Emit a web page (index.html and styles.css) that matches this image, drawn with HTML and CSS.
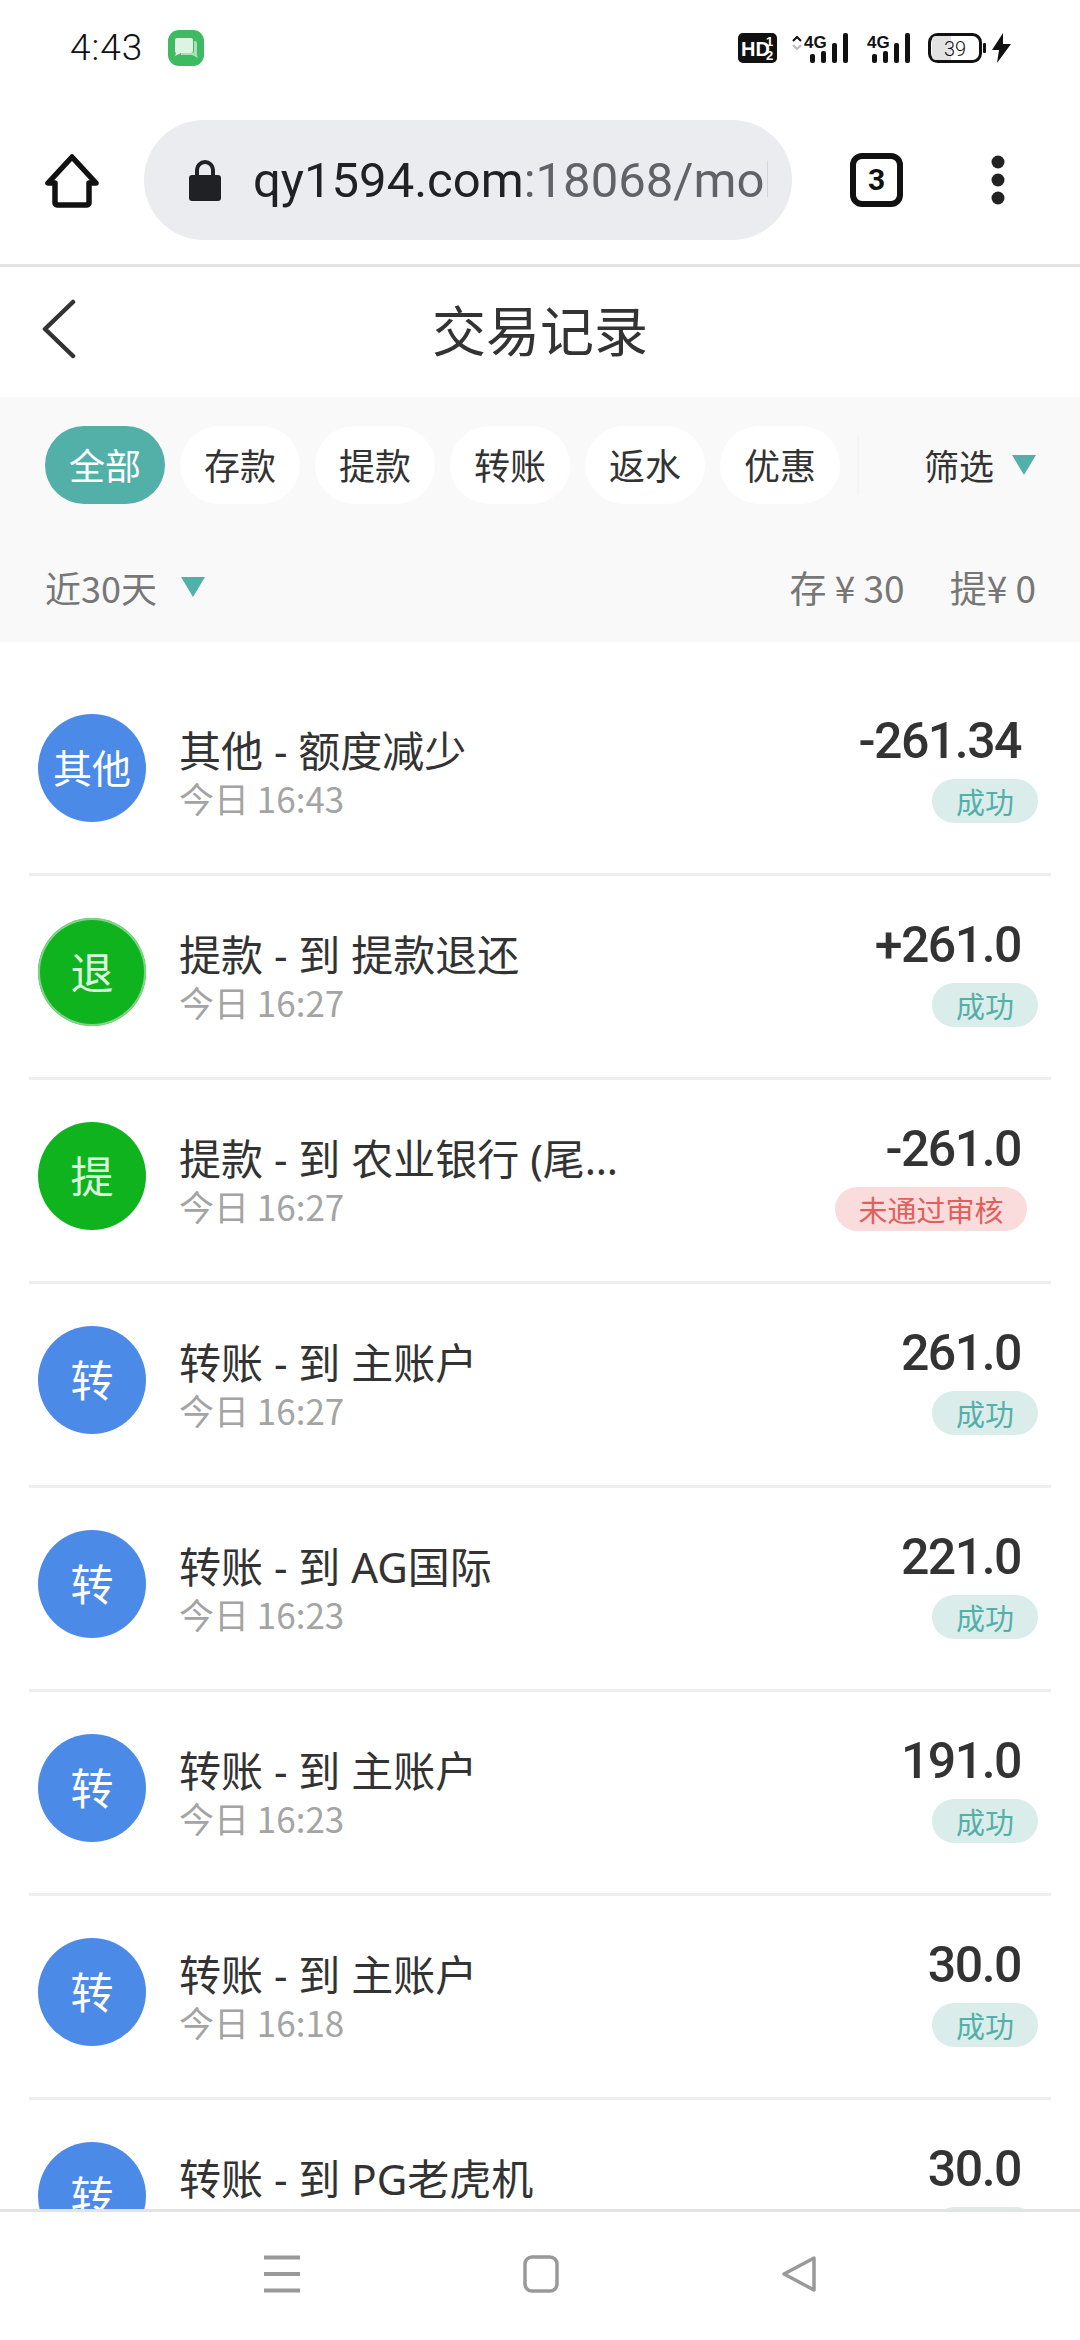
FILE: index.html
```html
<!DOCTYPE html>
<html lang="zh-CN">
<head>
<meta charset="utf-8">
<title>交易记录</title>
<link rel="stylesheet" href="styles.css">
</head>
<body>
<div class="phone">
  <div class="status">
    <div class="status-left">
      <span class="clock">4:43</span>
      <svg class="app-icon" width="36" height="36" viewBox="0 0 36 36"><rect width="36" height="36" rx="11" fill="#3dba62"/><path d="M26 11h1a2 2 0 0 1 2 2v12l1 3-6-3H13v-2h11a2 2 0 0 0 2-2z" fill="#a9dfb9"/><path d="M9 8h14a2 2 0 0 1 2 2v11a2 2 0 0 1-2 2H13l-6 3 1-3a2 2 0 0 1-1-2V10a2 2 0 0 1 2-2z" fill="#dff3e5"/></svg>
    </div>
    <div class="status-right">
      <svg width="39" height="30" viewBox="0 0 39 30"><rect width="39" height="30" rx="5" fill="#111"/><text x="3" y="23" class="hd">HD</text><text x="28" y="13" class="hd-s">1</text><text x="28" y="27" class="hd-s">2</text></svg>
      <svg class="sig1" width="56" height="30" viewBox="0 0 56 30"><path d="M1 8l4-4 4 4" fill="none" stroke="#111" stroke-width="2"/><path d="M1 12l4 4 4-4" fill="none" stroke="#bbb" stroke-width="2"/><text x="12" y="15" class="g4">4G</text><rect x="18" y="21" width="5" height="9" rx="2" fill="#111"/><rect x="29" y="18" width="5" height="12" rx="2" fill="#111"/><rect x="40" y="10" width="5" height="20" rx="2" fill="#111"/><rect x="51" y="0" width="5" height="30" rx="2" fill="#111"/></svg>
      <svg class="sig2" width="43" height="30" viewBox="0 0 43 30"><text x="0" y="15" class="g4">4G</text><rect x="5" y="21" width="5" height="9" rx="2" fill="#111"/><rect x="16" y="18" width="5" height="12" rx="2" fill="#111"/><rect x="27" y="10" width="5" height="20" rx="2" fill="#111"/><rect x="38" y="0" width="5" height="30" rx="2" fill="#111"/></svg>
      <svg class="batt" width="58" height="30" viewBox="0 0 58 30"><rect x="1.5" y="1.5" width="51" height="27" rx="8" fill="#fff" stroke="#111" stroke-width="3"/><path d="M4 7a4 4 0 0 1 4-4h15v24H8a4 4 0 0 1-4-4z" fill="#e2e2e2"/><rect x="55" y="10" width="3" height="10" rx="1" fill="#111"/><text x="27" y="23" class="batt-t">39</text></svg>
      <svg class="bolt" width="19" height="30" viewBox="0 0 19 30"><path d="M11 0L0 17h7L5 30 19 11h-8z" fill="#111"/></svg>
    </div>
  </div>

  <div class="toolbar">
    <svg class="home" width="58" height="58" viewBox="0 0 58 58"><path d="M29 6L5 32h7v20a2 2 0 0 0 2 2h30a2 2 0 0 0 2-2V32h7z" fill="none" stroke="#111" stroke-width="5.5" stroke-linejoin="round"/></svg>
    <div class="url">
      <svg width="34" height="42" viewBox="0 0 34 42"><path d="M9 17V11a8 8 0 0 1 16 0v6" fill="none" stroke="#202124" stroke-width="4"/><rect x="1" y="16" width="32" height="26" rx="3" fill="#202124"/></svg>
      <div class="url-text"><span class="u-dark">qy1594.com</span><span class="u-grey">:18068/mobile/trade</span></div>
    </div>
    <div class="tabs">3</div>
    <svg class="more" width="16" height="50" viewBox="0 0 16 50"><circle cx="8" cy="7" r="6.5" fill="#222"/><circle cx="8" cy="25" r="6.5" fill="#222"/><circle cx="8" cy="43" r="6.5" fill="#222"/></svg>
  </div>

  <div class="header">
    <svg class="back" width="38" height="60" viewBox="0 0 38 60"><path d="M33 3L5 30l28 27" fill="none" stroke="#333" stroke-width="4.5" stroke-linecap="round" stroke-linejoin="round"/></svg>
    <h1 class="title">交易记录</h1>
  </div>

  <div class="filters">
    <div class="chip-row">
      <div class="chips">
        <span class="chip active">全部</span>
        <span class="chip">存款</span>
        <span class="chip">提款</span>
        <span class="chip">转账</span>
        <span class="chip">返水</span>
        <span class="chip">优惠</span>
        <span class="chip-sep"></span>
      </div>
      <div class="filter-btn">筛选<i class="tri"></i></div>
    </div>
    <div class="sum-row">
      <div class="range">近30天<i class="tri"></i></div>
      <div class="sums"><span>存 ¥ 30</span><span>提¥ 0</span></div>
    </div>
  </div>

  <div class="list">
    <div class="row">
      <div class="avatar blue two">其他</div>
      <div class="info"><div class="name">其他 - 额度减少</div><div class="time">今日 16:43</div></div>
      <div class="side"><div class="amt">-261.34</div><div class="badge ok">成功</div></div>
    </div>
    <div class="row">
      <div class="avatar green ring">退</div>
      <div class="info"><div class="name">提款 - 到 提款退还</div><div class="time">今日 16:27</div></div>
      <div class="side"><div class="amt">+261.0</div><div class="badge ok">成功</div></div>
    </div>
    <div class="row">
      <div class="avatar green">提</div>
      <div class="info"><div class="name trunc">提款 - 到 农业银行 (尾号1234)</div><div class="time">今日 16:27</div></div>
      <div class="side"><div class="amt">-261.0</div><div class="badge bad">未通过审核</div></div>
    </div>
    <div class="row">
      <div class="avatar blue">转</div>
      <div class="info"><div class="name">转账 - 到 主账户</div><div class="time">今日 16:27</div></div>
      <div class="side"><div class="amt">261.0</div><div class="badge ok">成功</div></div>
    </div>
    <div class="row">
      <div class="avatar blue">转</div>
      <div class="info"><div class="name">转账 - 到 AG国际</div><div class="time">今日 16:23</div></div>
      <div class="side"><div class="amt">221.0</div><div class="badge ok">成功</div></div>
    </div>
    <div class="row">
      <div class="avatar blue">转</div>
      <div class="info"><div class="name">转账 - 到 主账户</div><div class="time">今日 16:23</div></div>
      <div class="side"><div class="amt">191.0</div><div class="badge ok">成功</div></div>
    </div>
    <div class="row">
      <div class="avatar blue">转</div>
      <div class="info"><div class="name">转账 - 到 主账户</div><div class="time">今日 16:18</div></div>
      <div class="side"><div class="amt">30.0</div><div class="badge ok">成功</div></div>
    </div>
    <div class="row">
      <div class="avatar blue">转</div>
      <div class="info"><div class="name">转账 - 到 PG老虎机</div><div class="time">今日 16:18</div></div>
      <div class="side"><div class="amt">30.0</div><div class="badge ok">成功</div></div>
    </div>
  </div>

  <div class="navbar">
    <svg width="38" height="38" viewBox="0 0 38 38"><path d="M1 2.5h36M1 19h36M1 35.5h36" stroke="#999" stroke-width="4"/></svg>
    <svg width="36" height="38" viewBox="0 0 36 38"><rect x="2" y="2" width="32" height="34" rx="7" fill="none" stroke="#999" stroke-width="3.5"/></svg>
    <svg width="36" height="38" viewBox="0 0 36 38"><path d="M33 3L3 19l30 16z" fill="none" stroke="#999" stroke-width="3.5" stroke-linejoin="round"/></svg>
  </div>
</div>
</body>
</html>
```

FILE: styles.css
```css
* { box-sizing: border-box; }
html, body { margin: 0; padding: 0; background: #fff; }
body { font-family: "Noto Sans CJK SC", "Noto Sans", sans-serif; color: #333; }
.phone { width: 1080px; height: 2340px; display: flex; flex-direction: column; overflow: hidden; background: #fff; }

.status { height: 100px; flex: none; display: flex; justify-content: space-between; align-items: flex-start; padding: 30px 69px 0 70px; }
.status-left { display: flex; align-items: center; gap: 25px; }
.clock { font-family: Roboto, sans-serif; font-size: 37px; line-height: 36px; color: #111; font-weight: 300; letter-spacing: 1px; }
.status-right { display: flex; align-items: center; margin-top: 3px; }
.sig1 { margin-left: 15px; }
.sig2 { margin-left: 19px; }
.batt { margin-left: 18px; }
.bolt { margin-left: 6px; }
.hd { font: 700 20px "Liberation Sans", sans-serif; fill: #fff; }
.hd-s { font: 700 13px "Liberation Sans", sans-serif; fill: #fff; }
.g4 { font: 700 17px "Liberation Sans", sans-serif; fill: #111; }
.batt-t { font: 300 20px Roboto, sans-serif; fill: #111; text-anchor: middle; }

.toolbar { height: 167px; flex: none; display: flex; align-items: flex-start; padding-top: 20px; border-bottom: 3px solid #e3e3e3; }
.home { margin: 31px 0 0 43px; flex: none; }
.url { width: 648px; height: 120px; margin-left: 43px; flex: none; border-radius: 60px; background: #ebecf0; display: flex; align-items: center; padding: 0 24px 0 44px; gap: 31px; }
.url svg { flex: none; }
.url-text { font-family: Roboto, sans-serif; font-size: 49px; white-space: nowrap; overflow: hidden; flex: 1; min-width: 0; }
.u-dark { color: #202124; }
.u-grey { color: #5f6368; }
.tabs { width: 53px; height: 54px; margin: 33px 0 0 58px; flex: none; border: 6px solid #111; border-radius: 12px; font: 700 30px/42px Roboto, sans-serif; text-align: center; color: #111; }
.more { margin: 35px 0 0 87px; flex: none; }

.header { height: 130px; flex: none; display: flex; align-items: center; justify-content: center; position: relative; padding-bottom: 6px; }
.back { position: absolute; left: 40px; top: 32px; }
.title { margin: 0; font-size: 54px; font-weight: 400; color: #333; line-height: 72px; }

.filters { height: 245px; flex: none; background: #f9f9f9; padding-top: 29px; }
.chip-row { display: flex; align-items: center; justify-content: space-between; padding: 0 44px 0 45px; }
.chips { display: flex; gap: 15px; align-items: center; }
.chip { width: 120px; height: 78px; border-radius: 39px; background: #fff; font-size: 36px; line-height: 76px; text-align: center; color: #333; }
.chip.active { background: #53b0a9; color: #fff; }
.chip-sep { width: 2px; height: 60px; margin-left: 2px; background: #f4f4f4; }
.filter-btn { font-size: 35px; line-height: 76px; color: #333; display: flex; align-items: center; gap: 18px; }
.tri { display: block; width: 0; height: 0; border-left: 12px solid transparent; border-right: 12px solid transparent; border-top: 20px solid #53b0a9; }
.sum-row { display: flex; align-items: center; justify-content: space-between; padding: 0 44px 0 45px; margin-top: 58px; height: 50px; color: #777; font-size: 36px; }
.range { display: flex; align-items: center; gap: 24px; }
.sums { display: flex; gap: 45px; font-size: 37px; }

.list { flex: 1; min-height: 0; overflow: hidden; padding: 30px 29px 0; display: flex; flex-direction: column; }
.row { flex: none; height: 204px; display: flex; align-items: flex-start; border-bottom: 3px solid #eeeeee; padding-left: 9px; }
.avatar { flex: none; width: 108px; height: 108px; margin-top: 42px; border-radius: 50%; color: #fff; font-size: 43px; line-height: 104px; text-align: center; }
.avatar.two { font-size: 39px; }
.blue { background: #4c8ae8; }
.green { background: #0fb31e; color: #dcf6de; }
.ring { box-shadow: inset 0 0 0 2px #7fd489; }
.info { flex: 1; min-width: 0; margin: 52px 0 0 33px; }
.name { font-family: "Noto Sans", "Noto Sans CJK SC", sans-serif; font-size: 42px; line-height: 54px; color: #333; white-space: nowrap; }
.trunc { width: 446px; overflow: hidden; text-overflow: ellipsis; }
.time { font-size: 35px; line-height: 40px; color: #a4a4a4; }
.side { flex: none; display: flex; flex-direction: column; align-items: flex-end; margin-top: 37px; width: 300px; }
.amt { font-family: Roboto, sans-serif; font-size: 50px; line-height: 64px; color: #333; padding-right: 30px; font-weight: 500; letter-spacing: -1.5px; }
.badge { height: 44px; border-radius: 22px; font-size: 29px; line-height: 44px; text-align: center; margin-top: 6px; }
.ok { width: 106px; background: #daedea; color: #53b0a9; margin-right: 13px; }
.bad { width: 192px; background: #fbdcdc; color: #e0605c; margin-right: 24px; }

.navbar { height: 131px; flex: none; background: #fff; border-top: 3px solid #e3e3e3; display: flex; align-items: center; justify-content: center; gap: 222px; padding-bottom: 4px; }
```
